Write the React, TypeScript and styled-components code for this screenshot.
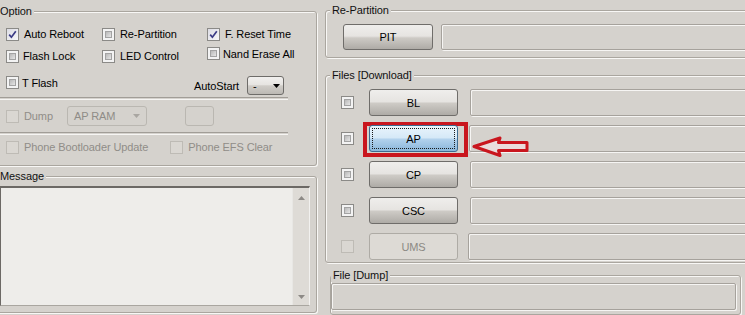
import React from 'react';
import styled, { createGlobalStyle, css } from 'styled-components';

const BG = '#d5d2cd';
const FONT = '"Liberation Sans", Arial, sans-serif';

const Global = createGlobalStyle`
  html, body { margin: 0; padding: 0; background: ${BG}; overflow: hidden; }
  body { font-family: ${FONT}; font-size: 11px; color: #000; }
  #root { width: 745px; height: 315px; overflow: hidden; }
`;

const Window = styled.div`
  display: flex;
  align-items: flex-start;
  width: 745px;
  height: 315px;
  overflow: hidden;
  background: ${BG};
  letter-spacing: -0.1px;
`;

const LeftColumn = styled.div`
  flex: none;
  display: flex;
  flex-direction: column;
  width: 326px;
  margin-left: -9px;
`;

const RightColumn = styled.div`
  flex: none;
  display: flex;
  flex-direction: column;
  width: 430px;
  margin-left: 8px;
`;

const Group = styled.fieldset<{ $top: number; $left?: number; $width?: number }>`
  margin: ${(p) => p.$top}px 0 0 ${(p) => p.$left ?? 0}px;
  padding: 0;
  min-width: 0;
  ${(p) => (p.$width ? `width: ${p.$width}px; box-sizing: border-box;` : '')}
  border: 1px solid #aaa69f;
  border-radius: 3px;
  box-shadow: inset 1px 1px 0 #f8f7f5, 1px 1px 0 #f8f7f5;
`;

const Legend = styled.legend<{ $indent?: number }>`
  margin-left: ${(p) => p.$indent ?? 4}px;
  padding: 0 2px;
  line-height: 13px;
  font-size: 11px;
  color: #111;
  background: ${BG};
`;

/* ---------- checkbox ---------- */
const Box = styled.span<{ $disabled?: boolean; $checked?: boolean }>`
  position: relative;
  flex: none;
  width: 13px;
  height: 13px;
  box-sizing: border-box;
  border: 1px solid ${(p) => (p.$disabled ? '#bebbb5' : '#8b8a87')};
  background: ${(p) => (p.$disabled ? '#dad7d2' : '#f3f3f3')};
  ${(p) =>
    !p.$disabled &&
    !p.$checked &&
    css`
      &::after {
        content: '';
        position: absolute;
        inset: 2px;
        box-sizing: border-box;
        border: 1px solid #a3a3a3;
        background: linear-gradient(135deg, #b9b9b9, #e6e6e6);
      }
    `}
  ${(p) =>
    p.$checked &&
    css`
      background: linear-gradient(135deg, #dcdce4, #f7f7f9);
    `}
  svg {
    position: absolute;
    left: 1px;
    top: 1px;
  }
`;

const CheckItem = styled.label<{ $disabled?: boolean; $gap?: number }>`
  display: inline-flex;
  align-items: center;
  gap: ${(p) => p.$gap ?? 5}px;
  white-space: nowrap;
  color: ${(p) => (p.$disabled ? '#908d88' : '#000')};
`;

function Check({ label, checked, disabled, gap }: { label?: string; checked?: boolean; disabled?: boolean; gap?: number }) {
  return (
    <CheckItem $disabled={disabled} $gap={gap}>
      <Box $disabled={disabled} $checked={checked}>
        {checked && (
          <svg width="9" height="9" viewBox="0 0 9 9">
            <path d="M1.2 4.6 L3.4 7.2 L7.8 1.2" fill="none" stroke="#3b3b86" strokeWidth="1.7" />
          </svg>
        )}
      </Box>
      {label}
    </CheckItem>
  );
}

/* ---------- option group ---------- */
const OptionBody = styled.div`
  display: flex;
  flex-direction: column;
  padding: 5px 0 6px 0;
`;

const CheckGrid = styled.div`
  display: grid;
  grid-template-columns: 96px 105px auto;
  grid-template-rows: 22px 22px;
  align-items: center;
  padding-left: 14px;
`;

const RaisedCell = styled.div`
  margin-top: -3px;
`;

const ThirdRow = styled.div`
  display: flex;
  align-items: flex-start;
  height: 30px;
  box-sizing: border-box;
  padding: 9px 32px 0 14px;
`;

const AutoStart = styled.div`
  margin-left: auto;
  display: flex;
  align-items: center;
  gap: 8px;
`;

const MiniSelect = styled.div`
  display: flex;
  align-items: center;
  justify-content: space-between;
  width: 37px;
  height: 19px;
  box-sizing: border-box;
  padding: 0 3px 0 5px;
  border: 1px solid #6e6c69;
  border-radius: 3px;
  background: linear-gradient(#f1f0ee 0%, #e6e4e1 45%, #cfccc7 52%, #bcb9b4 100%);
`;

const Divider = styled.div`
  height: 1px;
  margin: 0 28px 0 0;
  border-top: 1px solid #a19d97;
  border-bottom: 1px solid #f6f5f3;
`;

const OptionRow = styled.div<{ $h: number }>`
  display: flex;
  align-items: center;
  height: ${(p) => p.$h}px;
  padding-left: 14px;
`;

const DisabledCombo = styled.div`
  display: flex;
  align-items: center;
  justify-content: space-between;
  width: 80px;
  height: 20px;
  box-sizing: border-box;
  margin-left: 14px;
  padding: 0 6px 0 6px;
  border: 1px solid #bab7b1;
  border-radius: 3px;
  color: #8f8c87;
`;

const SmallBox = styled.div`
  width: 29px;
  height: 20px;
  box-sizing: border-box;
  margin-left: 38px;
  border: 1px solid #bab7b1;
  border-radius: 3px;
`;

const Spacer = styled.div<{ $w: number }>`
  width: ${(p) => p.$w}px;
  flex: none;
`;

/* ---------- message ---------- */
const MessageBox = styled.div`
  display: flex;
  width: 310px;
  height: 120px;
  box-sizing: border-box;
  margin: 3px 0 6px 8px;
  border-style: solid;
  border-width: 2px 1px 1px 1px;
  border-color: #6c6965 #f2f1ef #a9a6a0 #6c6965;
  background: #eeedea;
`;

const MessageText = styled.div`
  flex: 1;
`;

const ScrollBar = styled.div`
  flex: none;
  width: 16px;
  display: flex;
  flex-direction: column;
  justify-content: space-between;
  align-items: center;
  padding: 8px 0 6px;
  background: #dedbd6;
  border-left: 1px solid #e8e7e4;
`;

/* ---------- right side ---------- */
const RepartBody = styled.div`
  display: flex;
  align-items: center;
  gap: 8px;
  padding: 7px 0 7px 17px;
`;

const Button = styled.div<{ $variant?: 'normal' | 'active' | 'disabled'; $w?: number; $h?: number }>`
  position: relative;
  flex: none;
  display: flex;
  align-items: center;
  justify-content: center;
  width: ${(p) => p.$w ?? 89}px;
  height: ${(p) => p.$h ?? 27}px;
  box-sizing: border-box;
  border-radius: 3px;
  border: 1px solid #6f6d6a;
  background: linear-gradient(#efeeec 0%, #e6e4e1 46%, #cdcac5 54%, #aeaba6 100%);
  color: #000;
  ${(p) =>
    p.$variant === 'active' &&
    css`
      border-color: #3d6b90;
      background: linear-gradient(#e9f4fc 0%, #d6e9f7 46%, #b1d1ec 54%, #8ab6da 100%);
      &::after {
        content: '';
        position: absolute;
        inset: 2px;
        border: 1px dotted #1a1a1a;
      }
    `}
  ${(p) =>
    p.$variant === 'disabled' &&
    css`
      border-color: #aeaba5;
      background: #dddad5;
      color: #8c8984;
    `}
`;

const Field = styled.div<{ $h?: number; $inset?: number }>`
  flex: 1;
  height: ${(p) => p.$h ?? 27}px;
  margin-left: ${(p) => p.$inset ?? 0}px;
  box-sizing: border-box;
  border: 1px solid #a6a29c;
  border-radius: 2px;
  box-shadow: inset 1px 1px 0 #f6f5f3, 1px 1px 0 #f6f5f3;
`;

const FilesBody = styled.div`
  display: flex;
  flex-direction: column;
  gap: 9px;
  padding: 7px 0 2px 0;
`;

const FileRow = styled.div`
  position: relative;
  display: flex;
  align-items: center;
  height: 27px;
  padding-left: 15px;
`;

const ButtonSlot = styled.div<{ $highlight?: boolean }>`
  position: relative;
  flex: none;
  margin-left: 15px;
  ${(p) =>
    p.$highlight &&
    css`
      &::before {
        content: '';
        position: absolute;
        top: -3px;
        bottom: -5px;
        left: -6px;
        right: -10px;
        border: 4px solid #c9161e;
      }
    `}
`;

const Arrow = styled.svg`
  position: absolute;
  left: 146px;
  top: 11px;
`;

const DumpBody = styled.div`
  display: flex;
  padding: 1px 4px 4px 0;
`;

const Tri = ({ down, color = '#000', w = 7, h = 4 }: { down?: boolean; color?: string; w?: number; h?: number }) => (
  <svg width={w} height={h} viewBox={`0 0 ${w} ${h}`}>
    <polygon points={down ? `0,0 ${w},0 ${w / 2},${h}` : `0,${h} ${w},${h} ${w / 2},0`} fill={color} />
  </svg>
);

const files: { label: string; variant: 'normal' | 'active' | 'disabled'; inset: number }[] = [
  { label: 'BL', variant: 'normal', inset: 12 },
  { label: 'AP', variant: 'active', inset: 11 },
  { label: 'CP', variant: 'normal', inset: 12 },
  { label: 'CSC', variant: 'normal', inset: 12 },
  { label: 'UMS', variant: 'disabled', inset: 10 },
];

export default function App() {
  return (
    <>
      <Global />
      <Window>
        <LeftColumn>
          <Group $top={5}>
            <Legend $indent={6}>Option</Legend>
            <OptionBody>
              <CheckGrid>
                <Check label="Auto Reboot" checked />
                <Check label="Re-Partition" />
                <Check label="F. Reset Time" checked />
                <Check label="Flash Lock" gap={4} />
                <Check label="LED Control" />
                <RaisedCell>
                  <Check label="Nand Erase All" gap={3} />
                </RaisedCell>
              </CheckGrid>
              <ThirdRow>
                <Check label="T Flash" gap={3} />
                <AutoStart>
                  AutoStart
                  <MiniSelect>
                    <span>-</span>
                    <Tri down />
                  </MiniSelect>
                </AutoStart>
              </ThirdRow>
              <Divider />
              <OptionRow $h={32}>
                <Check label="Dump" disabled />
                <DisabledCombo>
                  <span>AP RAM</span>
                  <Tri down color="#a9a6a1" w={7} h={4} />
                </DisabledCombo>
                <SmallBox />
              </OptionRow>
              <Divider />
              <OptionRow $h={24}>
                <Check label="Phone Bootloader Update" disabled />
                <Spacer $w={22} />
                <Check label="Phone EFS Clear" disabled />
              </OptionRow>
            </OptionBody>
          </Group>
          <Group $top={4}>
            <Legend $indent={6}>Message</Legend>
            <MessageBox>
              <MessageText />
              <ScrollBar>
                <Tri color="#8d8a86" w={7} h={4} />
                <Tri down color="#8d8a86" w={7} h={4} />
              </ScrollBar>
            </MessageBox>
          </Group>
        </LeftColumn>
        <RightColumn>
          <Group $top={4}>
            <Legend $indent={4}>Re-Partition</Legend>
            <RepartBody>
              <Button $w={90} $h={26}>PIT</Button>
              <Field $h={26} />
            </RepartBody>
          </Group>
          <Group $top={11}>
            <Legend $indent={4}>Files [Download]</Legend>
            <FilesBody>
              {files.map((f) => (
                <FileRow key={f.label}>
                  <Check disabled={f.variant === 'disabled'} />
                  <ButtonSlot $highlight={f.variant === 'active'}>
                    <Button $variant={f.variant}>{f.label}</Button>
                  </ButtonSlot>
                  <Field $inset={f.inset} />
                  {f.variant === 'active' && (
                    <Arrow width="58" height="21" viewBox="0 0 58 21">
                      <polygon
                        points="2,10.5 28,2 26.5,6.5 55,6.5 55,14.5 26.5,14.5 28,19.5"
                        fill="#eadcdc"
                        stroke="#c9161e"
                        strokeWidth="3"
                        strokeLinejoin="round"
                      />
                    </Arrow>
                  )}
                </FileRow>
              ))}
            </FilesBody>
          </Group>
          <Group $top={6} $left={5} $width={411}>
            <Legend $indent={0}>File [Dump]</Legend>
            <DumpBody>
              <Field $h={27} />
            </DumpBody>
          </Group>
        </RightColumn>
      </Window>
    </>
  );
}
